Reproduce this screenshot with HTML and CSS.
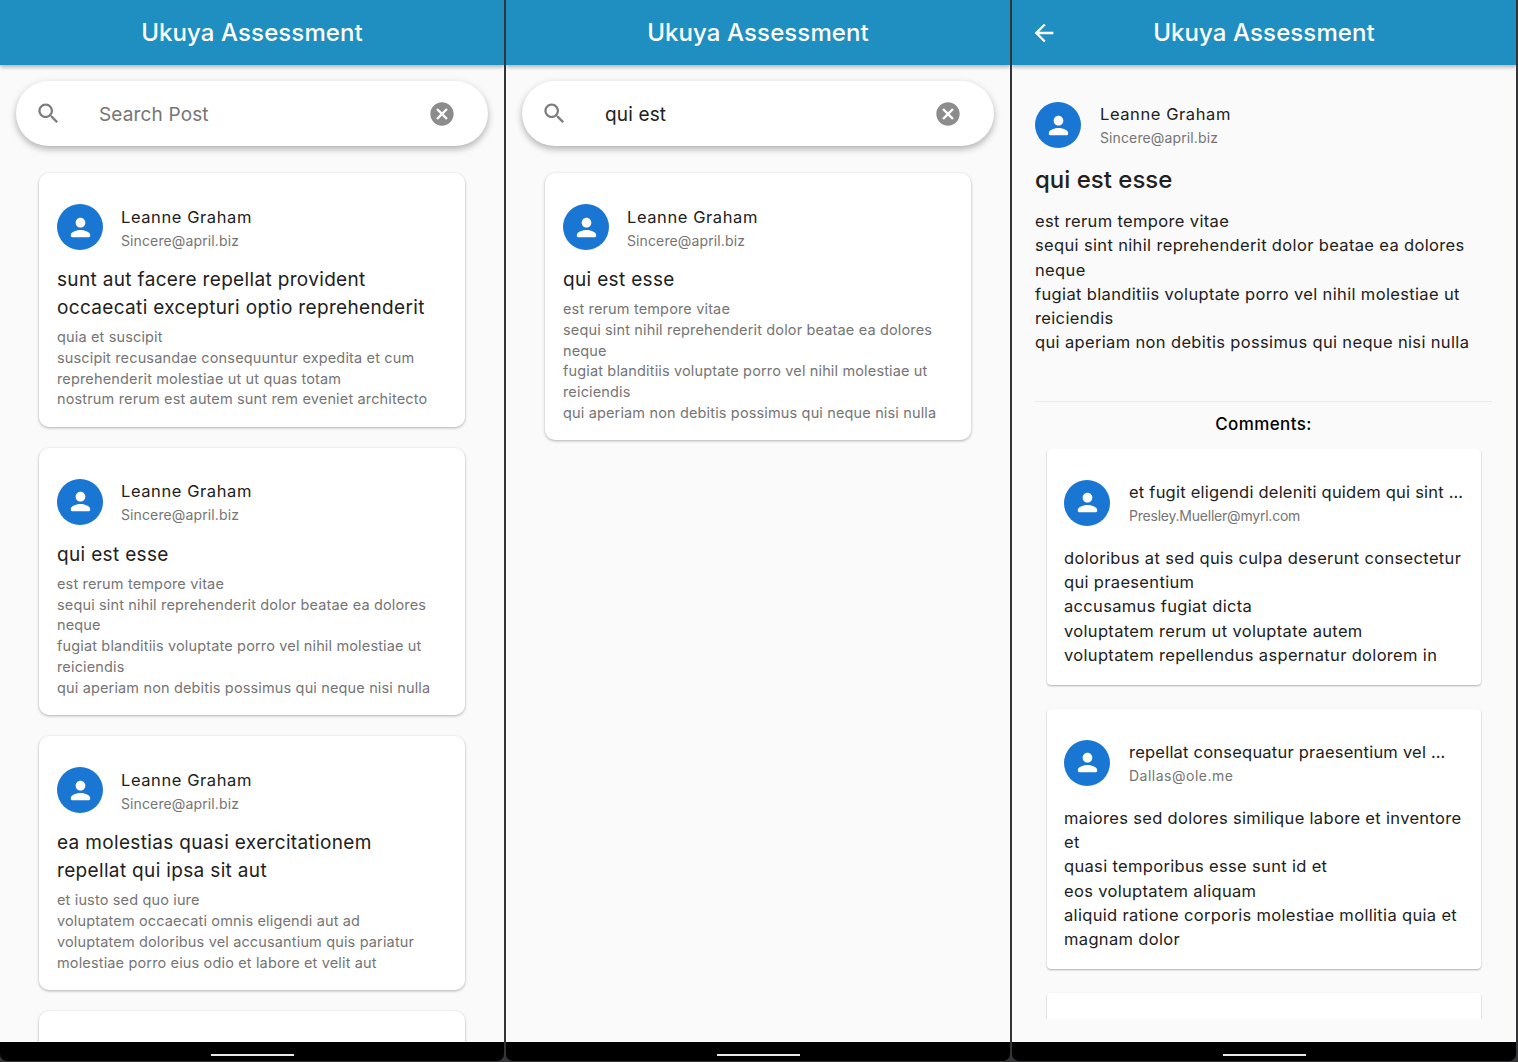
FILE: index.html
```html
<!DOCTYPE html>
<html lang="en">
<head>
<meta charset="utf-8">
<title>Ukuya Assessment</title>
<link rel="stylesheet" href="styles.css">
</head>
<body>
<svg class="defs" width="0" height="0" aria-hidden="true">
  <symbol id="person" viewBox="0 0 24 24"><path d="M12 12c2.21 0 4-1.79 4-4s-1.79-4-4-4-4 1.79-4 4 1.79 4 4 4zm0 2c-2.67 0-8 1.34-8 4v1c0 .55.45 1 1 1h14c.55 0 1-.45 1-1v-1c0-2.66-5.33-4-8-4z"/></symbol>
  <symbol id="search" viewBox="0 0 24 24"><path d="M15.5 14h-.79l-.28-.27C15.41 12.59 16 11.11 16 9.5 16 5.91 13.09 3 9.5 3S3 5.91 3 9.5 5.91 16 9.5 16c1.61 0 3.09-.59 4.23-1.57l.27.28v.79l5 4.99L20.49 19l-4.99-5zm-6 0C7.01 14 5 11.99 5 9.5S7.01 5 9.5 5 14 7.01 14 9.5 11.99 14 9.5 14z"/></symbol>
  <symbol id="cancel" viewBox="0 0 24 24"><path d="M12 2C6.47 2 2 6.47 2 12s4.47 10 10 10 10-4.47 10-10S17.53 2 12 2zm5 13.59L15.59 17 12 13.41 8.41 17 7 15.59 10.59 12 7 8.41 8.41 7 12 10.59 15.59 7 17 8.41 13.41 12 17 15.59z"/></symbol>
  <symbol id="back" viewBox="0 0 24 24"><path d="M20 11H7.83l5.59-5.59L12 4l-8 8 8 8 1.41-1.41L7.83 13H20v-2z"/></symbol>
</svg>
<main class="screens">

  <section class="phone">
    <div class="screen">
      <header class="appbar"><h1 class="appbar-title">Ukuya Assessment</h1></header>
      <div class="searchbar">
        <svg class="search-icon"><use href="#search"/></svg>
        <span class="search-text search-hint">Search Post</span>
        <svg class="clear-icon"><use href="#cancel"/></svg>
      </div>
      <div class="feed">
        <article class="card">
          <div class="author"><span class="avatar"><svg class="avatar-icon"><use href="#person"/></svg></span><div class="who"><div class="name">Leanne Graham</div><div class="email">Sincere@april.biz</div></div></div>
          <h2 class="post-title">sunt aut facere repellat provident<br>occaecati excepturi optio reprehenderit</h2>
          <p class="post-body">quia et suscipit<br>suscipit recusandae consequuntur expedita et cum<br>reprehenderit molestiae ut ut quas totam<br>nostrum rerum est autem sunt rem eveniet architecto</p>
        </article>
        <article class="card">
          <div class="author"><span class="avatar"><svg class="avatar-icon"><use href="#person"/></svg></span><div class="who"><div class="name">Leanne Graham</div><div class="email">Sincere@april.biz</div></div></div>
          <h2 class="post-title">qui est esse</h2>
          <p class="post-body">est rerum tempore vitae<br>sequi sint nihil reprehenderit dolor beatae ea dolores<br>neque<br>fugiat blanditiis voluptate porro vel nihil molestiae ut<br>reiciendis<br>qui aperiam non debitis possimus qui neque nisi nulla</p>
        </article>
        <article class="card">
          <div class="author"><span class="avatar"><svg class="avatar-icon"><use href="#person"/></svg></span><div class="who"><div class="name">Leanne Graham</div><div class="email">Sincere@april.biz</div></div></div>
          <h2 class="post-title">ea molestias quasi exercitationem<br>repellat qui ipsa sit aut</h2>
          <p class="post-body">et iusto sed quo iure<br>voluptatem occaecati omnis eligendi aut ad<br>voluptatem doloribus vel accusantium quis pariatur<br>molestiae porro eius odio et labore et velit aut</p>
        </article>
        <article class="card card-next"></article>
      </div>
    </div>
    <div class="navbar"><span class="home-bar"></span></div>
  </section>

  <section class="phone">
    <div class="screen">
      <header class="appbar"><h1 class="appbar-title">Ukuya Assessment</h1></header>
      <div class="searchbar">
        <svg class="search-icon"><use href="#search"/></svg>
        <span class="search-text">qui est</span>
        <svg class="clear-icon"><use href="#cancel"/></svg>
      </div>
      <div class="feed">
        <article class="card">
          <div class="author"><span class="avatar"><svg class="avatar-icon"><use href="#person"/></svg></span><div class="who"><div class="name">Leanne Graham</div><div class="email">Sincere@april.biz</div></div></div>
          <h2 class="post-title">qui est esse</h2>
          <p class="post-body">est rerum tempore vitae<br>sequi sint nihil reprehenderit dolor beatae ea dolores<br>neque<br>fugiat blanditiis voluptate porro vel nihil molestiae ut<br>reiciendis<br>qui aperiam non debitis possimus qui neque nisi nulla</p>
        </article>
      </div>
    </div>
    <div class="navbar"><span class="home-bar"></span></div>
  </section>

  <section class="phone">
    <div class="screen">
      <header class="appbar">
        <svg class="back-icon"><use href="#back"/></svg>
        <h1 class="appbar-title">Ukuya Assessment</h1>
      </header>
      <div class="detail">
        <div class="author author-detail"><span class="avatar"><svg class="avatar-icon"><use href="#person"/></svg></span><div class="who"><div class="name">Leanne Graham</div><div class="email">Sincere@april.biz</div></div></div>
        <h2 class="detail-title">qui est esse</h2>
        <p class="detail-body">est rerum tempore vitae<br>sequi sint nihil reprehenderit dolor beatae ea dolores<br>neque<br>fugiat blanditiis voluptate porro vel nihil molestiae ut<br>reiciendis<br>qui aperiam non debitis possimus qui neque nisi nulla</p>
        <hr class="rule">
        <h3 class="comments-title">Comments:</h3>
        <div class="comments">
          <article class="comment">
            <div class="author author-comment"><span class="avatar"><svg class="avatar-icon"><use href="#person"/></svg></span><div class="who"><div class="name comment-name">et fugit eligendi deleniti quidem qui sint …</div><div class="email email-tight">Presley.Mueller@myrl.com</div></div></div>
            <p class="comment-body">doloribus at sed quis culpa deserunt consectetur<br>qui praesentium<br>accusamus fugiat dicta<br>voluptatem rerum ut voluptate autem<br>voluptatem repellendus aspernatur dolorem in</p>
          </article>
          <article class="comment">
            <div class="author author-comment"><span class="avatar"><svg class="avatar-icon"><use href="#person"/></svg></span><div class="who"><div class="name comment-name">repellat consequatur praesentium vel …</div><div class="email email-wide">Dallas@ole.me</div></div></div>
            <p class="comment-body">maiores sed dolores similique labore et inventore<br>et<br>quasi temporibus esse sunt id et<br>eos voluptatem aliquam<br>aliquid ratione corporis molestiae mollitia quia et<br>magnam dolor</p>
          </article>
          <article class="comment comment-next"></article>
        </div>
      </div>
    </div>
    <div class="navbar"><span class="home-bar"></span></div>
  </section>

</main>
</body>
</html>
```
FILE: styles.css
```css
* { box-sizing: border-box; }
html, body { margin: 0; padding: 0; height: 100%; }
body {
  background: #343437;
  font-family: Inter, "Noto Sans", sans-serif;
  overflow: hidden;
}
.defs { position: absolute; }
h1, h2, h3, p { margin: 0; font-weight: 400; }

.screens {
  display: grid;
  grid-template-columns: repeat(3, 504px);
  column-gap: 2px;
  height: 1062px;
}
.phone {
  display: flex;
  flex-direction: column;
  height: 1062px;
  min-width: 0;
}
.screen {
  flex: 1;
  min-height: 0;
  display: flex;
  flex-direction: column;
  overflow: hidden;
  background: #fafafa;
}
.navbar {
  flex: 0 0 19px;
  display: flex;
  justify-content: center;
  padding-top: 12px;
  background: #000;
  border-radius: 0 0 7px 7px;
  margin-bottom: 1px;
}
.home-bar {
  display: block;
  width: 83px;
  height: 2px;
  background: #e8e8e8;
}

.appbar {
  flex: 0 0 65px;
  display: flex;
  align-items: center;
  justify-content: center;
  position: relative;
  z-index: 2;
  background: #1f8fc1;
  box-shadow: 0 2px 4px rgba(0, 0, 0, .3);
}
.appbar-title {
  color: #fff;
  font-size: 24px;
  font-weight: 500;
  letter-spacing: .1px;
  line-height: 32px;
}
.back-icon {
  position: absolute;
  left: 18px;
  top: 19px;
  width: 28px;
  height: 28px;
  fill: #fff;
}

.searchbar {
  flex: 0 0 65px;
  display: flex;
  align-items: center;
  margin: 16px 16px 0;
  padding: 0 32px 0 19px;
  background: #fff;
  border-radius: 33px;
  box-shadow: 0 3px 7px rgba(0, 0, 0, .3);
}
.search-icon { width: 27px; height: 27px; fill: #7d7d7d; flex: none; }
.search-text {
  flex: 1;
  margin-left: 37px;
  padding-top: 2px;
  color: #222;
  font-size: 19px;
  letter-spacing: .15px;
}
.search-hint { color: #757575; }
.clear-icon { width: 28px; height: 28px; fill: #8c8c8c; flex: none; }

.feed {
  display: flex;
  flex-direction: column;
  gap: 21.2px;
  padding: 27px 39px 0;
}
.card {
  flex: none;
  padding: 31px 18px 16.5px;
  background: #fff;
  border-radius: 10px;
  box-shadow: 0 1px 3px rgba(0, 0, 0, .3);
}
.card-next { height: 60px; }

.author { display: flex; align-items: flex-start; height: 46px; }
.avatar {
  flex: none;
  display: flex;
  align-items: center;
  justify-content: center;
  width: 46px;
  height: 46px;
  border-radius: 50%;
  background: #1976d2;
}
.avatar-icon { width: 29px; height: 29px; fill: #fff; }
.who { margin-left: 18px; padding-top: .5px; min-width: 0; }
.name {
  color: #212121;
  font-size: 16.5px;
  line-height: 24px;
  letter-spacing: .58px;
  white-space: nowrap;
}
.email {
  color: #757575;
  font-size: 14px;
  line-height: 24px;
  letter-spacing: .12px;
  white-space: nowrap;
}
.email-tight { letter-spacing: -.22px; }
.email-wide { letter-spacing: .5px; }

.post-title {
  margin-top: 16px;
  color: #212121;
  font-size: 19px;
  line-height: 28px;
  letter-spacing: .34px;
  white-space: nowrap;
}
.post-body {
  margin-top: 5px;
  color: #757575;
  font-size: 14.5px;
  line-height: 20.8px;
  letter-spacing: .15px;
  white-space: nowrap;
}

.detail {
  flex: 1;
  min-height: 0;
  display: flex;
  flex-direction: column;
  padding: 37px 24px 23px 23px;
}
.author-detail .who { margin-left: 19px; padding-top: 0; }
.detail-title {
  margin-top: 13.5px;
  color: #212121;
  font-size: 24px;
  font-weight: 500;
  line-height: 36px;
}
.detail-body {
  margin-top: 11.5px;
  color: #212121;
  font-size: 16.5px;
  line-height: 24.3px;
  letter-spacing: .35px;
  white-space: nowrap;
}
.rule {
  flex: none;
  width: 100%;
  height: 1px;
  margin: 46px 0 0;
  border: 0;
  background: #eaeaea;
}
.comments-title {
  margin-top: 10px;
  color: #000;
  font-size: 17px;
  font-weight: 500;
  line-height: 24px;
  letter-spacing: .4px;
  text-align: center;
}
.comments {
  flex: 1;
  min-height: 0;
  display: flex;
  flex-direction: column;
  gap: 24px;
  margin-top: 13px;
  padding: 0 11px 0 12px;
  overflow: hidden;
}
.comment {
  flex: none;
  padding: 31px 17px 17.5px;
  background: #fff;
  border-radius: 4px;
  box-shadow: 0 1px 2px rgba(0, 0, 0, .3);
}
.comment-next { height: 60px; }
.author-comment .who { margin-left: 19px; padding-top: 0; }
.comment-name { letter-spacing: .22px; }
.comment-body {
  margin-top: 20px;
  color: #212121;
  font-size: 16.5px;
  line-height: 24.3px;
  letter-spacing: .33px;
  white-space: nowrap;
}
```
